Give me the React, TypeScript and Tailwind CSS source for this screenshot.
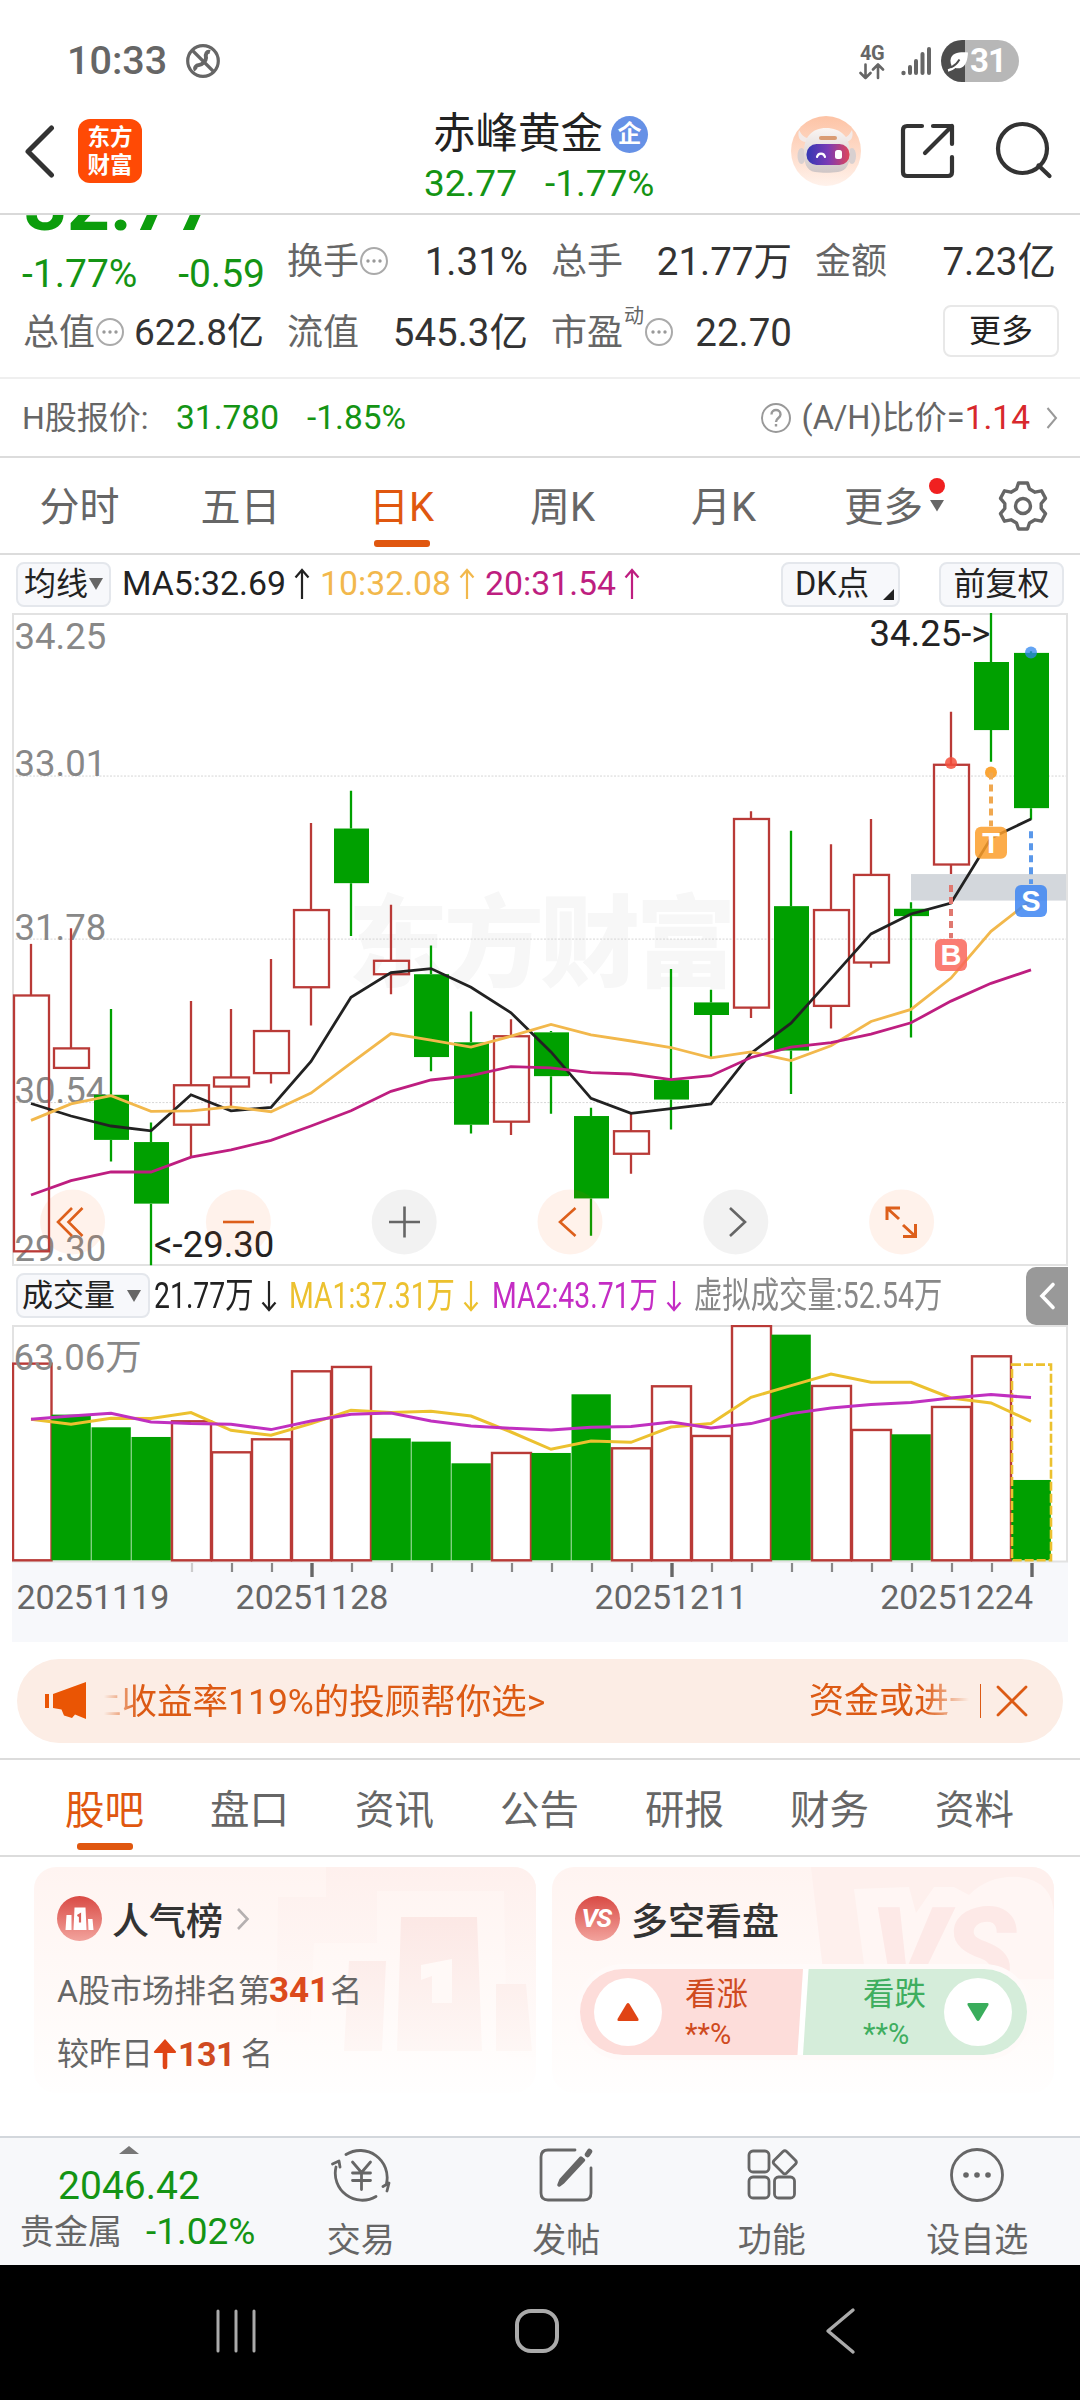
import React from "react";

type Candle = [up: 0 | 1, high: number, top: number, bottom: number, low: number];

const candles: Candle[] = [
  [1, 793, 912, 1502, 1502], [1, 757, 1034, 1079, 1079], [0, 943, 1141, 1245, 1295],
  [0, 1205, 1250, 1392, 1534], [1, 925, 1119, 1210, 1285], [1, 943, 1101, 1122, 1170],
  [1, 828, 994, 1091, 1115], [1, 514, 715, 893, 981], [0, 440, 527, 653, 775],
  [1, 703, 832, 863, 909], [0, 797, 863, 1054, 1087], [0, 949, 1020, 1210, 1230],
  [1, 967, 1006, 1203, 1234], [0, 994, 997, 1098, 1185], [0, 1171, 1190, 1380, 1466],
  [1, 1185, 1225, 1277, 1323], [0, 851, 1107, 1152, 1221], [0, 899, 928, 957, 1055],
  [1, 487, 505, 940, 964], [0, 532, 706, 1039, 1139], [1, 563, 715, 936, 988],
  [1, 505, 634, 836, 848], [0, 697, 712, 729, 1009], [1, 258, 380, 610, 632],
  [0, 30, 143, 300, 373], [0, 118, 122, 480, 507],
];
const ma5 = [1161, 1190, 1213, 1224, 1141, 1178, 1170, 1064, 916, 859, 850, 893, 952, 1042, 1149, 1184, 1173, 1162, 1045, 976, 873, 770, 724, 699, 549, 505];
const ma10 = [1200, 1162, 1143, 1179, 1178, 1169, 1180, 1137, 1068, 1000, 1015, 1031, 1006, 979, 1003, 1017, 1032, 1056, 1042, 1062, 1028, 972, 944, 872, 764, 692];
const ma20 = [1372, 1339, 1319, 1319, 1285, 1268, 1246, 1213, 1178, 1133, 1107, 1097, 1076, 1079, 1090, 1093, 1106, 1097, 1055, 1031, 1021, 1001, 975, 925, 884, 853];

const volumes: [0 | 1, number][] = [
  [1, 310], [0, 463], [0, 501], [0, 530], [1, 483], [1, 576], [1, 537], [1, 333], [1, 320],
  [0, 534], [0, 544], [0, 609], [1, 578], [0, 578], [0, 402], [1, 564], [1, 378], [1, 527],
  [1, 197], [0, 223], [1, 377], [1, 509], [0, 522], [1, 440], [1, 288], [0, 659],
];
const vma1 = [477, 492, 474, 475, 457, 510, 525, 490, 450, 457, 453, 467, 515, 567, 542, 546, 500, 490, 411, 376, 341, 366, 366, 413, 428, 483];
const vma2 = [477, 467, 459, 485, 490, 492, 508, 482, 462, 458, 482, 497, 504, 509, 501, 499, 485, 503, 490, 460, 443, 433, 427, 413, 403, 412];

const RED = "#b93a37";
const GREEN = "#00a000";
const cx = (i: number) => 19 + i * 40;
const py = (v: number) => (v - 30) / 2.306;
const vy = (v: number) => (v - 195) / 3 + 0.3;
const line = (vals: number[], y: (v: number) => number) => vals.map((v, i) => `${cx(i)},${y(v).toFixed(1)}`).join(" ");

function Dots() {
  return (
    <svg width="30" height="30" viewBox="0 0 30 30" className="-mt-[2px] shrink-0">
      <circle cx="15" cy="15" r="13" fill="none" stroke="#aaa" strokeWidth="2" />
      <circle cx="9" cy="15" r="1.7" fill="#999" />
      <circle cx="15" cy="15" r="1.7" fill="#999" />
      <circle cx="21" cy="15" r="1.7" fill="#999" />
    </svg>
  );
}

function StatusBar() {
  return (
    <div className="flex h-[108px] items-end pl-[67px] pr-[61px] text-[#666]">
      <div className="flex h-[94px] items-center">
        <span className="w-[102px] whitespace-nowrap text-[39.5px] font-medium leading-[40px]">10:33</span>
        <svg className="ml-[17px]" width="34" height="36" viewBox="0 0 34 36" fill="none" stroke="#666" strokeWidth="3.200">
          <circle cx="17" cy="18" r="15.3" />
          <path d="M6 7 L28 29" />
          <path d="M24 9 C21 8 19 11 20 15 C20 18 16 22 13 22 C10 22 8 25 10 27" strokeWidth="4" />
        </svg>
      </div>
      <div className="ml-auto flex h-[94px] items-center">
        <div className="flex w-[28px] flex-col items-center">
          <span className="text-[20px] font-bold leading-[20px] tracking-[-0.5px]">4G</span>
          <svg width="26" height="17" viewBox="0 0 26 17" fill="none" stroke="#666" strokeWidth="2.6" strokeLinecap="round" strokeLinejoin="round">
            <path d="M6.500 1.500V15 M1.500 10l5 5 5-5 M19 15V1.500 M14 6.500l5-5 5 5" />
          </svg>
        </div>
        <svg className="ml-[14px]" width="32" height="32" viewBox="0 0 32 32" fill="#666">
          <circle cx="3.500" cy="28" r="2.200" />
          <rect x="8" y="20" width="4" height="10" rx="2" />
          <rect x="14" y="14" width="4" height="16" rx="2" />
          <rect x="20.500" y="7" width="4" height="23" rx="2" />
          <rect x="27" y="2" width="4" height="28" rx="2" />
        </svg>
        <div className="ml-[9px] flex h-[42px] w-[78px] items-center overflow-hidden rounded-full bg-[linear-gradient(90deg,#4d4d4d_24px,#b7b7b7_24px)]">
          <svg className="ml-[6px] shrink-0" width="22" height="22" viewBox="0 0 22 22">
            <path d="M21 2.500C14 2 4 2 3.500 10.500c0 2 .5 4 1.200 5.500 3 2.500 7 3 10 1.500C19.500 15 20.500 9 21 2.500z" fill="#fff" />
            <path d="M1 20.500C6 19.500 11 15 13 10.500" stroke="#fff" strokeWidth="2.500" fill="none" />
            <path d="M4 17.500C7 16 10.500 13 12.500 9.500" stroke="#4d4d4d" strokeWidth="1.800" fill="none" />
          </svg>
          <span className="ml-[1px] text-[33px] font-bold leading-[42px] tracking-[-1px] text-white">31</span>
        </div>
      </div>
    </div>
  );
}

function Robot() {
  return (
    <svg width="70" height="70" viewBox="0 0 70 70">
      <defs>
        <linearGradient id="rbg" x1="0" y1="0" x2="0" y2="1"><stop offset="0" stopColor="#fdc3a5" /><stop offset="1" stopColor="#fff2eb" /></linearGradient>
        <linearGradient id="rface" x1="0" y1="0" x2="1" y2="0"><stop offset="0" stopColor="#3337b4" /><stop offset="0.500" stopColor="#7a3bb5" /><stop offset="1" stopColor="#e0455a" /></linearGradient>
        <linearGradient id="rhead" x1="0" y1="0" x2="0" y2="1"><stop offset="0" stopColor="#faf5f3" /><stop offset="1" stopColor="#cfc6c6" /></linearGradient>
      </defs>
      <circle cx="35" cy="35" r="35" fill="url(#rbg)" />
      <path d="M8 14c-2 7 1 12 7 12l5-4c-5 1-9-2-12-8z M61 14c2 7-1 12-7 12l-5-4c5 1 9-2 12-8z" fill="#f3eae8" />
      <ellipse cx="10.500" cy="40" rx="4" ry="8" fill="#d8d0d0" />
      <ellipse cx="61" cy="40" rx="4" ry="8" fill="#d8d0d0" />
      <path d="M35 12c-14 0-22 9-22 24 0 10 2 19 11 20 7 1 16 1 23 0 9-1 12-9 12-20 0-15-9-24-24-24z" fill="url(#rhead)" />
      <rect x="28" y="20" width="18" height="4" rx="2" fill="#d99b73" />
      <rect x="15.500" y="28" width="43" height="21" rx="10" fill="url(#rface)" />
      <path d="M26 41c1-4.500 7-4.500 8 0" fill="none" stroke="#fff" strokeWidth="2.200" strokeLinecap="round" />
      <rect x="44" y="34" width="7" height="9" rx="2.500" fill="#fff" />
    </svg>
  );
}

function Header() {
  return (
    <div className="grid h-[107px] grid-cols-[424px_1fr_290px] border-b-2 border-[#d9d9d9]">
      <div className="flex items-start pl-[23px] pt-[11px]">
        <svg className="mt-[5px]" width="34" height="54" viewBox="0 0 34 54" fill="none" stroke="#333" strokeWidth="5" strokeLinecap="round" strokeLinejoin="round">
          <path d="M28.500 4L5 27.500L28.500 51" />
        </svg>
        <div className="ml-[21px] flex h-[64px] w-[64px] flex-col items-center justify-center rounded-[12px] bg-[#ff4a05] text-[22.500px] font-bold leading-[28px] text-white">
          <span>东方</span>
          <span>财富</span>
        </div>
      </div>
      <div>
        <div className="flex h-[54px] items-center pl-[9px]">
          <span className="-mt-[3px] text-[42.500px] leading-[50px] text-[#222]">赤峰黄金</span>
          <span className="-mt-[2px] ml-[8px] flex size-[37px] items-center justify-center rounded-full bg-[#6691e6] text-[24px] font-bold leading-[24px] text-white">企</span>
        </div>
        <div className="flex h-[44px] items-center gap-[28px] text-[37px] leading-[44px] text-[#149414]">
          <span>32.77</span>
          <span>-1.77%</span>
        </div>
      </div>
      <div className="flex items-start pt-[8px]">
        <div className="ml-px"><Robot /></div>
        <svg className="ml-[38px] mt-[6px]" width="58" height="58" viewBox="0 0 58 58" fill="none" stroke="#333" strokeWidth="4.200" strokeLinecap="round" strokeLinejoin="round">
          <path d="M23 4H8Q4 4 4 8V50Q4 54 8 54H49Q53 54 53 50V35 M34 4H53V22 M53 4L26 31" />
        </svg>
        <svg className="ml-[36px] mt-[4px]" width="62" height="62" viewBox="0 0 62 62" fill="none" stroke="#333" strokeWidth="4.200" strokeLinecap="round">
          <circle cx="29.500" cy="28.500" r="24.500" />
          <path d="M45.500 45.500L56.500 56" />
        </svg>
      </div>
    </div>
  );
}

function Cell({ label, value, dots, sup, tight }: { label: string; value: string; dots?: boolean; sup?: string; tight?: boolean }) {
  return (
    <div className="flex h-[44px] w-[240px] items-center">
      <span className="-ml-px text-[36px] leading-[44px] text-[#666]">{label}</span>
      {sup && <span className="mb-[34px] ml-[1px] text-[20px] leading-[20px] text-[#666]">{sup}</span>}
      {dots && <Dots />}
      <span className={"ml-auto whitespace-nowrap leading-[44px] text-[#333] " + (tight ? "text-[37px]" : "text-[38.500px]")}>{value}</span>
    </div>
  );
}

function Quote() {
  return (
    <div className="h-[164px] overflow-hidden border-b-2 border-[#efefef] pl-[24px] pr-[21px]">
      <div className="flex h-[83px] gap-[24px]">
        <div className="flex w-[240px] flex-col">
          <div className="-mt-[45px] h-[82px] text-[75px] font-bold leading-[68px] text-[#0c9d0c]">32.77</div>
          <div className="flex h-[44px] w-[241px] shrink-0 items-center justify-between text-[39px] leading-[44px] text-[#149414]">
            <span className="-ml-[2px]">-1.77%</span>
            <span>-0.59</span>
          </div>
        </div>
        <div className="flex flex-1 gap-[24px] pt-[25px]">
          <Cell label="换手" value="1.31%" dots />
          <Cell label="总手" value="21.77万" />
          <Cell label="金额" value="7.23亿" />
        </div>
      </div>
      <div className="mt-[13px] flex items-start gap-[24px]">
        <Cell label="总值" value="622.8亿" dots tight />
        <Cell label="流值" value="545.3亿" />
        <Cell label="市盈" value="22.70" dots sup="动" />
        <div className="-mt-[6px] ml-auto flex h-[52px] w-[116px] items-center justify-center rounded-[8px] border-2 border-[#e8e8e8] text-[32px] leading-[48px] text-[#222]">更多</div>
      </div>
    </div>
  );
}

function HRow() {
  return (
    <div className="flex h-[79px] items-center border-b-2 border-[#dcdcdc] pl-[22px] pr-[22px] text-[33.500px] leading-[44px] text-[#666]">
      <span className="w-[154px] text-[32px]">H股报价:</span>
      <span className="w-[131px] text-[#149414]">31.780</span>
      <span className="text-[#149414]">-1.85%</span>
      <svg className="ml-auto" width="32" height="32" viewBox="0 0 32 32" fill="none" stroke="#999" strokeWidth="2">
        <circle cx="16" cy="16" r="14" />
        <path d="M11.500 12.500c0-6 9-6 9 0 0 3.500-4.500 3.500-4.500 7.500 M16 22v2.500" strokeWidth="2.400" />
      </svg>
      <span className="ml-[10px] text-[32.500px]">(A/H)比价=</span>
      <span className="text-[#d8282c]">1.14</span>
      <svg className="ml-[16px]" width="12" height="24" viewBox="0 0 12 24" fill="none" stroke="#999" strokeWidth="2">
        <path d="M1.500 2l8.500 10-8.500 10" />
      </svg>
    </div>
  );
}

function PeriodTabs() {
  return (
    <div className="flex h-[97px] border-b-2 border-[#dcdcdc] text-[40px] leading-[48px] text-[#666]">
      <div className="-ml-px flex">
        {["分时", "五日", "日K", "周K", "月K"].map((t) => (
          <div key={t} className={"flex w-[161px] flex-col items-center pt-[26px]" + (t === "日K" ? " text-[#e0570f]" : "")}>
            <span>{t}</span>
            {t === "日K" && <span className="mt-[8px] h-[7px] w-[56px] rounded-[3px] bg-[#e0570f]" />}
          </div>
        ))}
      </div>
      <div className="flex pl-[40px] pt-[26px]">
        <span className="text-[39.500px]">更多</span>
        <div className="ml-[5px] flex w-[18px] flex-col items-center">
          <span className="-mt-[6px] size-[16px] rounded-full bg-[#f02020]" />
          <svg className="mt-[5px]" width="14" height="13" viewBox="0 0 14 13"><path d="M0 1h14L7 12.500z" fill="#666" /></svg>
        </div>
      </div>
      <svg className="ml-auto mr-[32px] mt-[22px]" width="50" height="52" viewBox="0 0 50 52" fill="none" stroke="#666" strokeWidth="3.400" strokeLinejoin="round">
        <path d="M20.500 3h9l2 6 5.500 3.200 6.500-1.400 4 7.500-4.300 5.200v5l4.300 5.200-4 7.500-6.500-1.400L31.500 43l-2 6h-9l-2-6-5.500-3.200-6.500 1.400-4-7.500 4.300-5.200v-5L2.500 18.300l4-7.500 6.500 1.400L18.500 9z" />
        <circle cx="25" cy="26" r="7.500" />
      </svg>
    </div>
  );
}

function Arrow({ color, down }: { color: string; down?: boolean }) {
  return (
    <svg width="16" height="32" viewBox="0 0 16 32" fill="none" stroke={color} strokeWidth="2.200" className={down ? "rotate-180" : ""}>
      <path d="M8 31V2 M1.500 9.500L8 2l6.500 7.500" />
    </svg>
  );
}

function MaRow() {
  return (
    <div className="flex h-[58px] items-center pl-[16px] pr-[16px] text-[33.800px] leading-[42px]">
      <div className="flex h-[45px] w-[95px] items-center rounded-[8px] border-2 border-[#e4e7ec] bg-[#f7f8fb] pl-[6px] text-[32px] text-[#222]">
        均线
        <svg className="ml-px" width="14" height="14" viewBox="0 0 14 14"><path d="M0 1h14L7 13z" fill="#666" /></svg>
      </div>
      <span className="ml-[11px] w-[172px] text-[#222]">MA5:32.69</span>
      <Arrow color="#222" />
      <span className="ml-[10px] w-[131px] text-[#f2b84c]">10:32.08</span>
      <span className="ml-[8px] flex"><Arrow color="#f2b84c" /></span>
      <span className="ml-[10px] w-[131px] text-[#be1e80]">20:31.54</span>
      <span className="ml-[8px] flex"><Arrow color="#be1e80" /></span>
      <div className="ml-auto flex h-[45px] w-[119px] items-center rounded-[8px] border-2 border-[#e4e7ec] bg-[#f7f8fb] pl-[12px] text-[32.500px] text-[#222]">
        DK点
        <svg className="ml-auto mr-[4px] mt-[20px]" width="11" height="11" viewBox="0 0 11 11"><path d="M11 0v11H0z" fill="#222" /></svg>
      </div>
      <div className="ml-[39px] flex h-[45px] w-[125px] items-center justify-center rounded-[8px] border-2 border-[#e4e7ec] bg-[#f7f8fb] text-[32px] text-[#222]">前复权</div>
    </div>
  );
}

function Marker({ x, v, color, t }: { x: number; v: number; color: string; t: string }) {
  return (
    <g>
      <rect x={x - 16} y={py(v)} width="32" height="32" rx="6" fill={color} fillOpacity="0.860" />
      <text x={x} y={py(v) + 26} fontSize="29" fontWeight="700" fill="#fff" textAnchor="middle" fontFamily="Liberation Sans, sans-serif">{t}</text>
    </g>
  );
}

function PriceChart() {
  const labels: [string, number][] = [["34.25", 113], ["33.01", 405], ["31.78", 783], ["30.54", 1159], ["29.30", 1525]];
  return (
    <svg className="ml-[12px] block" width="1056" height="653" viewBox="0 0 1056 653">
      <text x="336" y={py(874)} fontSize="100" fontWeight="900" fill="#f7f7f7" textLength="388">东方财富</text>
      {[406, 782, 1159].map((v) => (
        <path key={v} d={`M0 ${py(v)}H1055`} stroke="#d6d6d6" strokeWidth="1" strokeDasharray="2 1.500" />
      ))}
      <rect x="899" y={py(632)} width="156" height="26.500" fill="#d3d7dc" />
      <rect x="1" y="1" width="1054" height="651" fill="none" stroke="#e2e2e2" strokeWidth="2" />
      <g fontSize="36.500" fill="#888">
        {labels.map(([t, v]) => <text key={t} x="2.500" y={py(v)}>{t}</text>)}
      </g>
      {candles.map(([up, h, t, b, l], i) => (
        <g key={i} stroke={up ? RED : GREEN} strokeWidth="2.300">
          <path d={`M${cx(i)} ${py(h)}V${py(t)}M${cx(i)} ${py(b)}V${py(l)}`} />
          {up ? (
            <rect x={cx(i) - 17} y={py(t)} width="35" height={py(b) - py(t)} fill="none" />
          ) : (
            <rect x={cx(i) - 17} y={py(t)} width="35" height={py(b) - py(t)} fill={GREEN} stroke="none" />
          )}
        </g>
      ))}
      <g fill="none" strokeWidth="2.800">
        <polyline points={line(ma5, py)} stroke="#222" />
        <polyline points={line(ma10, py)} stroke="#f2b84c" />
        <polyline points={line(ma20, py)} stroke="#be1e80" />
      </g>
      <g fontSize="36.500" fill="#222">
        <text x="857.500" y={py(107)}>34.25-&gt;</text>
        <text x="142" y={py(1516)}>&lt;-29.30</text>
      </g>
      <circle cx={cx(23)} cy={py(376)} r="6" fill="#f4503c" fillOpacity="0.850" />
      <circle cx={cx(24)} cy={py(398)} r="6" fill="#fba535" />
      <circle cx={cx(25)} cy={py(121)} r="6" fill="#2f86f0" fillOpacity="0.750" />
      <g strokeWidth="4" strokeDasharray="7 5">
        <path d={`M${cx(23)} ${py(657)}V${py(780)}`} stroke="#e07870" />
        <path d={`M${cx(24)} ${py(398)}V${py(522)}`} stroke="#f0a850" />
        <path d={`M${cx(25)} ${py(533)}V${py(655)}`} stroke="#5a98ea" />
      </g>
      <Marker x={cx(23)} v={782} color="#f9685c" t="B" />
      <Marker x={cx(24)} v={523} color="#fc9e2c" t="T" />
      <Marker x={cx(25)} v={657} color="#3f86f2" t="S" />
      {[0, 1, 2, 3, 4, 5].map((i) => (
        <circle key={i} cx={60.600 + i * 165.800} cy="609" r="32.500" fill={i === 2 || i === 4 ? "#000" : "#ff5a00"} fillOpacity={i === 2 || i === 4 ? 0.050 : 0.080} />
      ))}
      <g fill="none" stroke="#dd5f1b" strokeWidth="2.600">
        <path d="M60 595L46 609L60 623 M70.500 595L56.500 609L70.500 623" />
        <path d="M211 609H242" />
        <path d="M563.500 595L548 609L563.500 623" />
        <path d="M888 595H875V607 M875.500 595.500L887 606 M891 612L903 623 M903.500 611V623.500H891" strokeWidth="3" />
      </g>
      <g fill="none" stroke="#666" strokeWidth="2.600">
        <path d="M377 609H408M392.500 593.500V624.500" />
        <path d="M718 595L733 609L718 623" />
      </g>
    </svg>
  );
}

function Squeezed({ w, color, children }: { w: string; color: string; children: React.ReactNode }) {
  return (
    <span className={"block shrink-0 " + w}>
      <span className={"block w-max origin-left scale-x-[0.788] whitespace-nowrap text-[36px] leading-[44px] " + color}>{children}</span>
    </span>
  );
}

function VolumeHeader() {
  return (
    <div className="flex h-[59px] items-center pl-[16px] pr-[12px]">
      <div className="flex h-[45px] w-[134px] items-center rounded-[8px] border-2 border-[#e4e7ec] bg-[#f7f8fb] pl-[4px] text-[31px] leading-[40px] text-[#222]">
        成交量
        <svg className="ml-[12px]" width="14" height="12" viewBox="0 0 14 12"><path d="M0 0h14L7 12z" fill="#666" /></svg>
      </div>
      <div className="flex items-center pl-[4px]">
        <Squeezed w="w-[107px]" color="text-[#222]">21.77万</Squeezed>
        <Arrow color="#222" down />
        <Squeezed w="w-[174px] ml-[12px]" color="text-[#ecc12f]">MA1:37.31万</Squeezed>
        <Arrow color="#ecc12f" down />
        <Squeezed w="w-[174px] ml-[13px]" color="text-[#c42cc4]">MA2:43.71万</Squeezed>
        <Arrow color="#c42cc4" down />
        <Squeezed w="w-[246px] ml-[12px]" color="text-[#888]">虚拟成交量:52.54万</Squeezed>
      </div>
      <div className="ml-auto flex h-[58px] w-[42px] shrink-0 items-center justify-center rounded-l-[10px] bg-[#999]">
        <svg width="18" height="30" viewBox="0 0 18 30" fill="none" stroke="#fff" strokeWidth="3.600" strokeLinecap="round"><path d="M15 3.500L4 15l11 11.500" /></svg>
      </div>
    </div>
  );
}

function VolumeChart() {
  const bottom = vy(900);
  return (
    <svg className="ml-[12px] block" width="1056" height="317" viewBox="0 0 1056 317">
      <rect x="0" y="237" width="1056" height="80" fill="#f7f8fb" />
      <rect x="1" y="1" width="1054" height="235.500" fill="none" stroke="#e2e2e2" strokeWidth="2" />
      {volumes.map(([up, t], i) =>
        up ? (
          <rect key={i} x={Math.max(cx(i) - 19, 1)} y={vy(t)} width={i === 0 ? 38.500 : 39} height={bottom - vy(t)} fill="none" stroke={RED} strokeWidth="2.400" />
        ) : (
          <rect key={i} x={cx(i) - 19.500} y={vy(t)} width="39.300" height={bottom - vy(t)} fill={GREEN} />
        ),
      )}
      <rect x="1000" y={vy(313)} width="39" height={bottom - vy(313)} fill="none" stroke="#ecc12f" strokeWidth="2.600" strokeDasharray="9 3" />
      <text x="1.500" y={vy(329)} fontSize="36.500" fill="#888">63.06万</text>
      <g fill="none" strokeWidth="3">
        <polyline points={line(vma1, vy)} stroke="#ecc12f" />
        <polyline points={line(vma2, vy)} stroke="#c030c0" />
      </g>
      {volumes.map((_, i) =>
        i < 4 ? null : i === 7 || i === 16 || i === 25 ? (
          <path key={i} d={`M${cx(i) + 1} 238V252`} stroke="#666" strokeWidth="3.400" />
        ) : (
          <path key={i} d={`M${cx(i) + 1} 238V247`} stroke={i === 4 ? "#ccc" : "#888"} strokeWidth="2.200" />
        ),
      )}
      <g fontSize="34" fill="#666">
        <text x="4.500" y="284">20251119</text>
        <text x="300" y="284" textAnchor="middle">20251128</text>
        <text x="659" y="284" textAnchor="middle">20251211</text>
        <text x="1021" y="284" textAnchor="end">20251224</text>
      </g>
    </svg>
  );
}

function Banner() {
  return (
    <div className="mx-[17px] mt-[17px] flex h-[84px] items-center rounded-full bg-[#fcede5] pl-[28px] pr-[35px] text-[#dc5a14]">
      <svg width="43" height="38" viewBox="0 0 43 38" fill="#ea5504">
        <rect x="0" y="12" width="4" height="14" />
        <path d="M8 12L41 0V37L30 32.500L27 36L19 33.500L16.500 27.500L8 26z" />
      </svg>
      <div className="ml-[16px] mt-[2px] flex h-[44px] w-[450px] overflow-hidden whitespace-nowrap text-[35.500px] leading-[44px] [mask-image:linear-gradient(90deg,transparent,#000_34px)]">
        <span className="-ml-[18px]">上收益率119%的投顾帮你选&gt;</span>
      </div>
      <div className="ml-auto mt-[2px] h-[44px] w-[160px] overflow-hidden whitespace-nowrap text-[35px] leading-[44px] [mask-image:linear-gradient(90deg,#000_115px,transparent)]">资金或进一步</div>
      <span className="ml-[11px] h-[34px] w-px bg-[#dc5a14]" />
      <svg className="ml-[15px]" width="32" height="32" viewBox="0 0 32 32" stroke="#dc5a14" strokeWidth="2.800" strokeLinecap="round"><path d="M2 2l28 28M30 2L2 30" /></svg>
    </div>
  );
}

function InfoTabs() {
  return (
    <div className="mt-[15px] flex h-[99px] border-y-2 border-[#dcdcdc] pl-[32px] text-[39.500px] leading-[48px] text-[#666]">
      {["股吧", "盘口", "资讯", "公告", "研报", "财务", "资料"].map((t, i) => (
        <div key={t} className={"flex w-[145px] flex-col items-center pt-[27px]" + (i === 0 ? " text-[#e0570f]" : "")}>
          <span>{t}</span>
          {i === 0 && <span className="mt-[8px] h-[7px] w-[56px] rounded-[3px] bg-[#e0570f]" />}
        </div>
      ))}
    </div>
  );
}

function Cards() {
  return (
    <div className="flex h-[279px] gap-[16px] pl-[34px] pr-[26px] pt-[10px] text-[32px] leading-[40px] text-[#666]">
      <div className="relative h-[226px] w-[502px] overflow-hidden rounded-[22px] bg-[linear-gradient(180deg,#fff4f1,#fffcfb_80%,#fffefe)]">
        <svg className="absolute right-0 top-0" width="262" height="226" viewBox="0 0 262 226">
          <defs>
            <linearGradient id="pod" x1="0" y1="0" x2="0" y2="1"><stop offset="0" stopColor="#fef0ed" /><stop offset="1" stopColor="#fffcfb" /></linearGradient>
            <linearGradient id="podB" x1="0" y1="0" x2="0" y2="1"><stop offset="0" stopColor="#fce8e5" /><stop offset="1" stopColor="#fef7f5" /></linearGradient>
          </defs>
          <path d="M4 30H52V0H262V190H233L230 24H103V76H40L36 165H2z" fill="url(#pod)" />
          <path d="M75 94H112L108 184H70z M127 50H203L208 184H123z M222 117H252L258 184H222z" fill="url(#podB)" />
          <path d="M147 98L178 92V136H158V109L147 113z" fill="#fff9f7" />
        </svg>
        <div className="relative pl-[23px]">
          <div className="flex h-[106px] items-center">
            <svg className="-mt-[4px]" width="45" height="45" viewBox="0 0 45 45">
              <defs><linearGradient id="ic1" x1="0" y1="0" x2="0" y2="1"><stop offset="0" stopColor="#d94a44" /><stop offset="1" stopColor="#f2a39d" /></linearGradient></defs>
              <circle cx="22.500" cy="22.500" r="22.500" fill="url(#ic1)" />
              <path d="M9.500 19h5v15h-6z M17.500 11.500h11l1 22.500h-13z M31 23h4.500l1 11h-5z" fill="#fff" />
              <path d="M20.500 20l2.500-1.500v8" stroke="#d9605a" strokeWidth="2.200" fill="none" />
            </svg>
            <span className="ml-[10px] mt-[5px] text-[37px] font-medium leading-[46px] text-[#333]">人气榜</span>
            <svg className="-mt-[2px] ml-[13px]" width="14" height="26" viewBox="0 0 14 26" fill="none" stroke="#b5b0b0" strokeWidth="2.600"><path d="M2 3l9.500 10L2 23" /></svg>
          </div>
          <div className="-mt-[2px] flex h-[40px] items-center">
            <span>A股市场排名第</span>
            <span className="-ml-px text-[35px] font-bold text-[#dc4a1c]">341</span>
            <span className="ml-[1px]">名</span>
          </div>
          <div className="mt-[23px] flex h-[40px] items-center">
            <span>较昨日</span>
            <svg width="24" height="32" viewBox="0 0 24 32" fill="#e04414"><path d="M12 1L23 13.500a1 1 0 0 1-1 1.500H14.300V29a2.300 2.300 0 0 1-4.600 0V15H2a1 1 0 0 1-1-1.500z" /></svg>
            <span className="w-[60px] pl-[1px] text-[34px] font-bold tracking-[-0.5px] text-[#d04a20]">131</span>
            <span className="ml-[4px]">名</span>
          </div>
        </div>
      </div>
      <div className="relative h-[226px] w-[502px] overflow-hidden rounded-[22px] bg-[linear-gradient(180deg,#fff4f1,#fffcfb_80%,#fffefe)]">
        <svg className="absolute right-0 top-0" width="250" height="112" viewBox="0 0 250 112">
          <path d="M7 0H250V112H20z" fill="#fef0ed" />
          <path d="M50 22L105 20L112 46L130 20H150L165 28Q185 8 215 10Q250 14 250 50V112H62z" fill="#fff6f4" />
          <text x="66" y="126" fontSize="120" fontWeight="900" fontStyle="italic" fill="#fde9e7" letterSpacing="-4">VS</text>
        </svg>
        <div className="relative">
          <div className="flex h-[106px] items-center pl-[23px]">
            <div className="-mt-[4px] flex size-[45px] items-center justify-center rounded-full bg-[linear-gradient(180deg,#d94a44,#f2a39d)] pr-[3px] text-[26px] font-bold italic leading-[26px] tracking-[-1.5px] text-white">VS</div>
            <span className="ml-[11px] mt-[5px] text-[37px] font-medium leading-[46px] text-[#333]">多空看盘</span>
          </div>
          <div className="-mt-[9px] ml-[23px] flex h-[96px] w-[457px] overflow-hidden rounded-full border-[5px] border-[#fffaf9] bg-white text-[31.500px]">
            <div className="flex w-[223px] items-center bg-[#fdddda] pl-[14px] text-[#cf4a20] [clip-path:polygon(0_0,100%_0,97.500%_100%,0_100%)]">
              <div className="flex size-[68px] shrink-0 items-center justify-center rounded-full bg-white">
                <svg width="24" height="20" viewBox="0 0 24 20" fill="#e04414"><path d="M10.500 2q1.500-2 3 0l9 15q.5 2-1 2h-19q-1.500 0-1-2z" /></svg>
              </div>
              <div className="ml-[23px] flex flex-col pt-[4px]">
                <span className="leading-[34px]">看涨</span>
                <span className="mt-[5px] text-[29px] leading-[34px]">**%</span>
              </div>
            </div>
            <div className="flex flex-1 items-center bg-[#d5edda] pr-[15px] text-[#3fae5f] [clip-path:polygon(2.500%_0,100%_0,100%_100%,0_100%)]">
              <div className="ml-auto mr-[18px] flex flex-col pt-[4px]">
                <span className="leading-[34px]">看跌</span>
                <span className="mt-[5px] text-[29px] leading-[34px]">**%</span>
              </div>
              <div className="flex size-[68px] shrink-0 items-center justify-center rounded-full bg-white">
                <svg className="rotate-180" width="24" height="20" viewBox="0 0 24 20" fill="#3aad5c"><path d="M10.500 2q1.500-2 3 0l9 15q.5 2-1 2h-19q-1.500 0-1-2z" /></svg>
              </div>
            </div>
          </div>
        </div>
      </div>
    </div>
  );
}

function NavItem({ label, children }: { label: string; children: React.ReactNode }) {
  return (
    <div className="flex w-[205.500px] flex-col items-center pt-[7px]">
      <svg width="60" height="60" viewBox="0 0 60 60" fill="none" stroke="#666" strokeWidth="2.800" strokeLinecap="round" strokeLinejoin="round">{children}</svg>
      <span className="mt-[15px] text-[34px] leading-[40px] text-[#666]">{label}</span>
    </div>
  );
}

function BottomBar() {
  return (
    <div className="flex h-[129px] border-t-2 border-[#d3d7dc] bg-[#f7f8fa]">
      <div className="flex w-[258px] flex-col items-center">
        <svg className="mt-[8px]" width="20" height="8" viewBox="0 0 20 8"><path d="M10 0l10 8H0z" fill="#777" /></svg>
        <span className="mt-[10px] text-[39px] leading-[44px] text-[#149414]">2046.42</span>
        <div className="mt-[2px] flex w-full items-center pl-[20px] text-[37px] leading-[44px] text-[#149414]">
          <span className="text-[34px] text-[#666]">贵金属</span>
          <span className="ml-[24px]">-1.02%</span>
        </div>
      </div>
      <NavItem label="交易">
        <path d="M15 9.500A27 27 0 0 1 55.500 38.500 M56 46l2-8-6 3.500 M45 51.500A27 27 0 0 1 5 22 M1.500 19l6.500-3 1 6" />
        <path d="M21.500 17L30.500 27.500L39.500 17 M21.500 28H39.500 M21.500 35.500H39.500 M30.500 28V44.500" />
      </NavItem>
      <NavItem label="发帖">
        <path d="M39 5H12Q5 5 5 12V48Q5 55 12 55H48Q55 55 55 48V23" />
        <path d="M47.500 15L27 37L23 40L25 35L45 13z" strokeWidth="3.500" />
        <path d="M51.500 9.500L53.500 6.500" strokeWidth="5.500" />
      </NavItem>
      <NavItem label="功能">
        <rect x="7" y="6" width="20" height="21" rx="4" />
        <rect x="7" y="32" width="20" height="21" rx="4" />
        <rect x="32.500" y="32" width="20" height="21" rx="4" />
        <path d="M41 6.500q1.800-1.500 3.600 0l9 9q1.500 1.800 0 3.600l-9 9q-1.800 1.500-3.600 0l-9-9q-1.500-1.800 0-3.600z" />
      </NavItem>
      <NavItem label="设自选">
        <circle cx="30" cy="30" r="25.500" />
        <g fill="#666" stroke="none"><circle cx="19" cy="30" r="2.800" /><circle cx="30" cy="30" r="2.800" /><circle cx="41" cy="30" r="2.800" /></g>
      </NavItem>
    </div>
  );
}

export default function App() {
  return (
    <div className="flex h-[2400px] w-[1080px] flex-col overflow-hidden bg-white font-[Roboto,'Noto_Sans_CJK_SC',sans-serif]">
      <StatusBar />
      <Header />
      <Quote />
      <HRow />
      <PeriodTabs />
      <MaRow />
      <PriceChart />
      <VolumeHeader />
      <VolumeChart />
      <Banner />
      <InfoTabs />
      <Cards />
      <BottomBar />
      <div className="flex flex-1 items-center justify-between bg-black pb-[3px] pl-[214px] pr-[223px]">
        <svg width="44" height="46" viewBox="0 0 44 46" stroke="#aaa" strokeWidth="3" strokeLinecap="round"><path d="M4 3V43M22 3V43M40 3V43" /></svg>
        <svg className="-ml-[9px]" width="48" height="48" viewBox="0 0 48 48"><rect x="4" y="4" width="40" height="40" rx="14" fill="none" stroke="#aaa" strokeWidth="4" /></svg>
        <svg width="32" height="48" viewBox="0 0 32 48" fill="none" stroke="#aaa" strokeWidth="3.400" strokeLinecap="round" strokeLinejoin="round"><path d="M28 3L3 24L28 45" /></svg>
      </div>
    </div>
  );
}
